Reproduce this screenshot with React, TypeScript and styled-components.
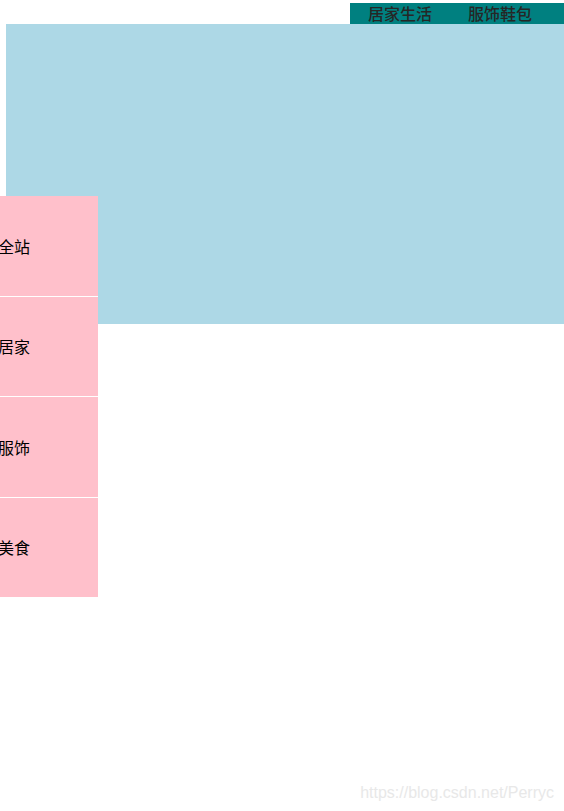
import React from 'react';
import styled, { createGlobalStyle } from 'styled-components';

const GlobalStyle = createGlobalStyle`
  html, body {
    margin: 0;
    padding: 0;
    background: #fff;
  }
  body {
    font-family: "Noto Sans CJK SC", "Liberation Sans", sans-serif;
    overflow: hidden;
  }
`;

const Page = styled.div`
  position: relative;
  width: 564px;
  height: 811px;
  display: flex;
  flex-direction: column;
`;

const TopBar = styled.div`
  display: flex;
  justify-content: flex-end;
  padding-top: 3px;
`;

const Nav = styled.ul`
  display: flex;
  margin: 0;
  padding: 0 14px 0 0;
  list-style: none;
  background: #008080;
  height: 21px;
`;

const NavItem = styled.li`
  width: 100px;
  text-align: center;
  font-size: 16px;
  font-weight: 500;
  line-height: 21px;
  color: #262626;
`;

const Banner = styled.div`
  position: relative;
  margin-left: 6px;
  height: 300px;
  background: #add8e6;
`;

const Sidebar = styled.ul`
  position: absolute;
  top: 172px;
  left: -6px;
  width: 98px;
  margin: 0;
  padding: 0;
  list-style: none;
  background: #ffc0cb;
`;

const SideItem = styled.li<{ $last?: boolean }>`
  height: 99.5px;
  display: flex;
  align-items: center;
  text-indent: -2px;
  font-size: 16px;
  color: #000;
  border-bottom: ${({ $last }) => ($last ? 'none' : '1px solid #fff')};
`;

const Watermark = styled.div`
  position: absolute;
  right: 10px;
  bottom: 9px;
  font-family: "Liberation Sans", Arial, sans-serif;
  font-size: 16px;
  color: #e8e8e8;
`;

const navs = ['居家生活', '服饰鞋包'];
const sides = ['全站', '居家', '服饰', '美食'];

const App = () => {
  return (
    <Page>
      <GlobalStyle />
      <TopBar>
        <Nav>
          {navs.map((n) => (
            <NavItem key={n}>{n}</NavItem>
          ))}
        </Nav>
      </TopBar>
      <Banner>
        <Sidebar>
          {sides.map((s, i) => (
            <SideItem key={s} $last={i === sides.length - 1}>
              {s}
            </SideItem>
          ))}
        </Sidebar>
      </Banner>
      <Watermark>https://blog.csdn.net/Perryc</Watermark>
    </Page>
  );
};

export default App;
